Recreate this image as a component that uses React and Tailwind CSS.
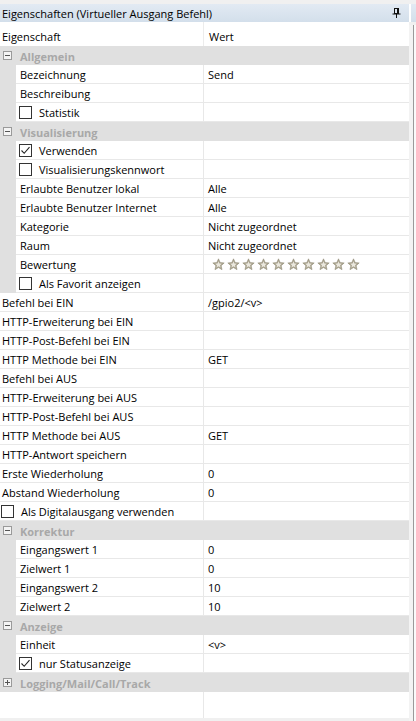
import React from "react";

const F = { fontFamily: '"Open Sans", "Noto Sans", sans-serif' };

function Checkbox({ checked }) {
  return (
    <div className="w-[13px] h-[13px] border border-[#333333] bg-white shrink-0 flex items-center justify-center">
      {checked && (
        <svg width="11" height="11" viewBox="0 0 11 11">
          <path d="M1.5 5.5 L4.2 8.3 L9.5 2.2" fill="none" stroke="#222" strokeWidth="1.1" />
        </svg>
      )}
    </div>
  );
}

function Star() {
  return (
    <svg width="13" height="13" viewBox="0 0 24 24" className="shrink-0">
      <polygon
        points="12,1.5 15.1,8.4 22.5,9.1 16.9,14.1 18.5,21.5 12,17.7 5.5,21.5 7.1,14.1 1.5,9.1 8.9,8.4"
        fill="#aaa48f"
        stroke="#8d8773"
        strokeWidth="1"
      />
      <polygon
        points="12,6 13.7,10.2 18,10.6 14.8,13.5 15.7,17.6 12,15.4 8.3,17.6 9.2,13.5 6,10.6 10.3,10.2"
        fill="#ebe8de"
      />
    </svg>
  );
}

function Group({ label, open = true }) {
  return (
    <div className="flex h-[19px] items-center bg-[#e0e0e0]">
      <div className="ml-[3px] w-[9px] h-[9px] border border-[#9a9a9a] bg-[#f4f4f4] relative shrink-0">
        <div className="absolute left-[1px] right-[1px] top-[3px] h-px bg-[#555]" />
        {!open && <div className="absolute top-[1px] bottom-[1px] left-[3px] w-px bg-[#555]" />}
      </div>
      <span className="ml-[8px] pt-[1px] text-[11px] font-bold text-[#a8a8a8] leading-none">{label}</span>
    </div>
  );
}

function Row({ label, value, indent = true, cb, checked, stars }) {
  return (
    <div className="flex h-[19px]">
      {indent && <div className="w-4 bg-[#e0e0e0] shrink-0" />}
      <div className="flex-1 flex bg-white border-b border-[#e8e8e8]">
        <div
          className={
            (indent ? "w-[188px] " : "w-[204px] ") +
            "shrink-0 border-r border-[#e8e8e8] flex items-center " +
            (cb ? (indent ? "pl-[3px] gap-[7px]" : "pl-[1px] gap-[7px]") : indent ? "pl-[4px]" : "pl-[2px]")
          }
        >
          {cb && <Checkbox checked={checked} />}
          <span className="pt-[1px] text-[11px] text-black leading-none whitespace-nowrap">{label}</span>
        </div>
        <div className="flex-1 flex items-center pl-[4px]">
          {stars ? (
            <div className="flex gap-[2px] pl-[4px]">
              {Array.from({ length: 10 }).map((_, i) => (
                <Star key={i} />
              ))}
            </div>
          ) : (
            <span className="pt-[1px] text-[11px] text-black leading-none whitespace-nowrap">{value}</span>
          )}
        </div>
      </div>
    </div>
  );
}

export default function App() {
  return (
    <div className="w-[416px] h-[721px] bg-[#f0f0f0] flex overflow-hidden" style={F}>
      <div className="w-[409px] flex flex-col shrink-0">
        <div className="h-[4px] bg-[#f0f0f0]" />
        <div className="h-[18px] bg-gradient-to-b from-[#e2eaf3] to-[#d3dfeb] flex items-center justify-between pl-[2px] pr-[8px]">
          <span className="text-[11px] text-black leading-none">Eigenschaften (Virtueller Ausgang Befehl)</span>
          <svg width="9" height="10" viewBox="0 0 9 10">
            <rect x="2.5" y="0.5" width="4" height="5" fill="none" stroke="#111" strokeWidth="1" />
            <rect x="5" y="0.5" width="1.5" height="5" fill="#111" />
            <line x1="0.5" y1="6" x2="8.5" y2="6" stroke="#111" strokeWidth="1" />
            <line x1="4.5" y1="6" x2="4.5" y2="10" stroke="#111" strokeWidth="1" />
          </svg>
        </div>
        <div className="h-[24px] bg-white flex">
          <div className="w-[204px] border-r border-[#ececec] flex items-center pl-[2px] pt-[4px]">
            <span className="text-[11px] text-black leading-none">Eigenschaft</span>
          </div>
          <div className="flex-1 flex items-center pl-[5px] pt-[4px]">
            <span className="text-[11px] text-black leading-none">Wert</span>
          </div>
        </div>

        <Group label="Allgemein" />
        <Row label="Bezeichnung" value="Send" />
        <Row label="Beschreibung" />
        <Row label="Statistik" cb />
        <Group label="Visualisierung" />
        <Row label="Verwenden" cb checked />
        <Row label="Visualisierungskennwort" cb />
        <Row label="Erlaubte Benutzer lokal" value="Alle" />
        <Row label="Erlaubte Benutzer Internet" value="Alle" />
        <Row label="Kategorie" value="Nicht zugeordnet" />
        <Row label="Raum" value="Nicht zugeordnet" />
        <Row label="Bewertung" stars />
        <Row label="Als Favorit anzeigen" cb />
        <Row indent={false} label="Befehl bei EIN" value="/gpio2/<v>" />
        <Row indent={false} label="HTTP-Erweiterung bei EIN" />
        <Row indent={false} label="HTTP-Post-Befehl bei EIN" />
        <Row indent={false} label="HTTP Methode bei EIN" value="GET" />
        <Row indent={false} label="Befehl bei AUS" />
        <Row indent={false} label="HTTP-Erweiterung bei AUS" />
        <Row indent={false} label="HTTP-Post-Befehl bei AUS" />
        <Row indent={false} label="HTTP Methode bei AUS" value="GET" />
        <Row indent={false} label="HTTP-Antwort speichern" />
        <Row indent={false} label="Erste Wiederholung" value="0" />
        <Row indent={false} label="Abstand Wiederholung" value="0" />
        <Row indent={false} label="Als Digitalausgang verwenden" cb />
        <Group label="Korrektur" />
        <Row label="Eingangswert 1" value="0" />
        <Row label="Zielwert 1" value="0" />
        <Row label="Eingangswert 2" value="10" />
        <Row label="Zielwert 2" value="10" />
        <Group label="Anzeige" />
        <Row label="Einheit" value="<v>" />
        <Row label="nur Statusanzeige" cb checked />
        <Group label="Logging/Mail/Call/Track" open={false} />

        <div className="flex-1 bg-white flex">
          <div className="w-[204px] border-r border-[#e8e8e8]" />
        </div>
        <div className="h-[3px] bg-[#f0f0f0]" />
      </div>
      <div className="flex-1 flex flex-col">
        <div className="h-[4px]" />
        <div className="h-[18px] flex">
          <div className="w-[2px] bg-white" />
          <div className="flex-1 bg-gradient-to-b from-[#e2eaf3] to-[#d3dfeb]" />
        </div>
        <div className="h-[3px]" />
        <div className="flex-1 flex">
          <div className="w-[4px] bg-[#f3f3f3]" />
          <div className="w-px bg-[#9a9a9a]" />
          <div className="flex-1 bg-[#fafafa]" />
        </div>
      </div>
    </div>
  );
}
